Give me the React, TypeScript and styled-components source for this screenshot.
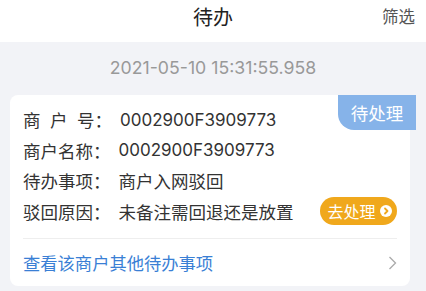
import React from "react";
import styled, { createGlobalStyle } from "styled-components";

const Global = createGlobalStyle`
  html, body { margin: 0; padding: 0; background: #f2f3f7; }
  body { font-family: Inter, "Noto Sans CJK SC", sans-serif; }
  * { box-sizing: border-box; }
`;

const Page = styled.div`
  width: 426px;
  min-height: 291px;
  background: #f2f3f7;
`;

const Header = styled.header`
  position: relative;
  height: 42px;
  background: #fff;
  display: flex;
  align-items: flex-start;
  justify-content: center;
`;

const Title = styled.h1`
  margin: 0;
  height: 34px;
  line-height: 34px;
  font-size: 20px;
  font-weight: 400;
  color: #222;
  font-family: "Noto Sans CJK SC", sans-serif;
`;

const Filter = styled.span`
  position: absolute;
  right: 11px;
  top: 2px;
  line-height: 28px;
  font-size: 16.5px;
  color: #555;
  font-family: "Noto Sans CJK SC", sans-serif;
`;

const DateRow = styled.div`
  height: 53px;
  display: flex;
  align-items: center;
  justify-content: center;
  font-size: 17.7px;
  color: #999;
  padding-bottom: 3px;
`;

const Card = styled.div`
  position: relative;
  margin: 0 16px 0 10px;
  background: #fff;
  border-radius: 8px;
  padding: 9.5px 13px 0;
`;

const Badge = styled.div`
  position: absolute;
  top: 0;
  right: -6px;
  width: 78px;
  height: 35px;
  background: #86b3e9;
  border-radius: 0 0 0 16px;
  color: #fff;
  font-size: 17.5px;
  font-family: "Noto Sans CJK SC", sans-serif;
  display: flex;
  align-items: center;
  justify-content: center;
`;

const Rows = styled.div`
  padding-bottom: 11px;
  border-bottom: 1px solid #eeeeee;
`;

const Row = styled.div`
  height: 30.5px;
  display: flex;
  align-items: center;
  font-size: 17.5px;
  color: #333;
`;

const Label = styled.span<{ $gap?: number }>`
  display: inline-flex;
  gap: ${(p) => p.$gap ?? 0}px;
  font-family: "Noto Sans CJK SC", sans-serif;
  color: #333;
`;

const Value = styled.span<{ $cjk?: boolean }>`
  margin-left: ${(p) => (p.$cjk ? 8 : 8)}px;
  font-size: ${(p) => (p.$cjk ? 17.5 : 17)}px;
  font-family: ${(p) => (p.$cjk ? '"Noto Sans CJK SC", sans-serif' : 'Inter, "Noto Sans CJK SC", sans-serif')};
  flex: 1;
`;

const GoButton = styled.button`
  flex: none;
  height: 28px;
  width: 77px;
  border: none;
  border-radius: 14px;
  background: #f0a81c;
  color: #fff;
  font-size: 16px;
  font-family: "Noto Sans CJK SC", sans-serif;
  display: inline-flex;
  align-items: center;
  justify-content: center;
  gap: 4px;
  padding: 0 0 0 2px;
`;

const LinkRow = styled.div`
  height: 47px;
  display: flex;
  align-items: center;
  justify-content: space-between;
  padding-top: 1px;
`;

const LinkText = styled.a`
  font-size: 17.3px;
  color: #3a7fd5;
  font-family: "Noto Sans CJK SC", sans-serif;
  text-decoration: none;
`;

const GoIcon = () => (
  <svg width="12" height="12" viewBox="0 0 12 12">
    <circle cx="6" cy="6" r="6" fill="#fff" />
    <path d="M5 3.5 L7.5 6 L5 8.5" stroke="#f0a81c" strokeWidth="1.8" fill="none" strokeLinecap="round" strokeLinejoin="round" />
  </svg>
);

const Chevron = () => (
  <svg width="9" height="14" viewBox="0 0 9 14">
    <path d="M1.5 1 L7.5 7 L1.5 13" stroke="#aaa" strokeWidth="1.3" fill="none" />
  </svg>
);

export default function App() {
  return (
    <Page>
      <Global />
      <Header>
        <Title>待办</Title>
        <Filter>筛选</Filter>
      </Header>
      <DateRow>2021-05-10 15:31:55.958</DateRow>
      <Card>
        <Badge>待处理</Badge>
        <Rows>
          <Row>
            <Label $gap={9.5}>
              <span>商</span>
              <span>户</span>
              <span>号：</span>
            </Label>
            <Value>0002900F3909773</Value>
          </Row>
          <Row>
            <Label>商户名称：</Label>
            <Value>0002900F3909773</Value>
          </Row>
          <Row>
            <Label>待办事项：</Label>
            <Value $cjk>商户入网驳回</Value>
          </Row>
          <Row>
            <Label>驳回原因：</Label>
            <Value $cjk>未备注需回退还是放置</Value>
            <GoButton>
              去处理
              <GoIcon />
            </GoButton>
          </Row>
        </Rows>
        <LinkRow>
          <LinkText>查看该商户其他待办事项</LinkText>
          <Chevron />
        </LinkRow>
      </Card>
    </Page>
  );
}
